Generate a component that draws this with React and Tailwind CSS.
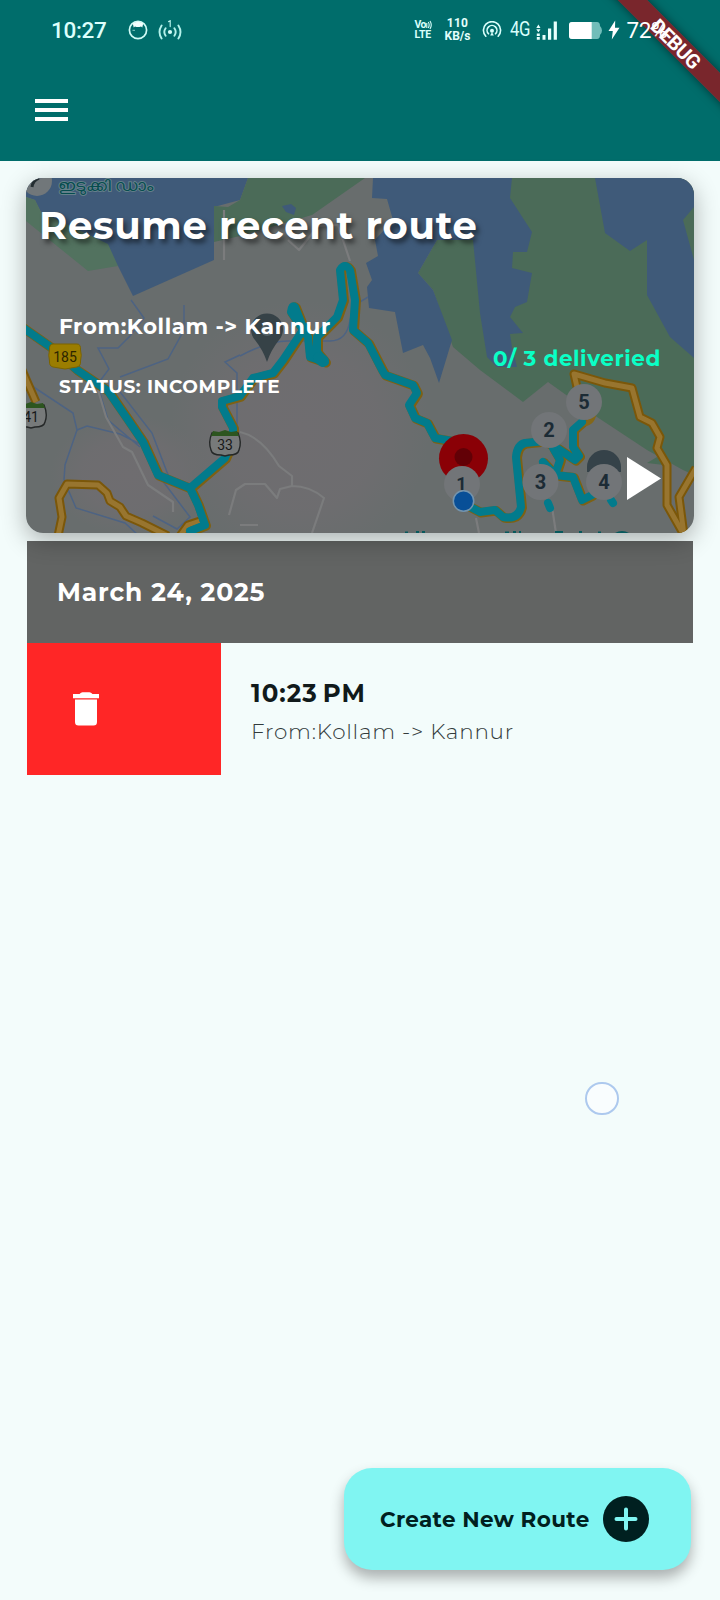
import React from "react";

const WATER = "#3f5a79";
const PARK = "#4b6b58";
const ROUTE = "#027b8c";

function SeenIcon() {
  return (
    <svg width="20" height="20" viewBox="0 0 20 20" fill="none" className="ml-[20.5px]">
      <circle cx="10" cy="10" r="8.6" stroke="#d0fbf6" strokeWidth="1.7" />
      <path d="M4.8 3.6 Q10 -.3 15.200 3.600 L14.300 7.600 L13 6.500 Q10 7.600 7 6.500 L5.700 7.600Z" fill="#f4fffe" />
      <path d="M4.500 10.300h2.500" stroke="#a8e5df" strokeWidth=".8" />
    </svg>
  );
}

function HotspotIcon() {
  return (
    <svg width="24" height="20" viewBox="0 0 24 20" fill="none" stroke="#b4f2eb" strokeWidth="1.9" strokeLinecap="round" className="ml-[10px]">
      <path d="M3.600 5.500Q-.6 12 3.600 18.500M20.400 5.500Q24.600 12 20.400 18.500M7.600 8.300Q5 12 7.600 15.700M16.400 8.300Q19 12 16.400 15.700" />
      <circle cx="12" cy="12" r="2.100" fill="#d4fdf8" stroke="none" />
      <path d="M10.600 1.600L12.200 .8V6.600" strokeWidth="1.200" />
    </svg>
  );
}

function StatusBar() {
  return (
    <div className="relative z-20 flex h-[60px] items-center pl-[51px] font-['Roboto',sans-serif] text-white">
      <span className="w-[56px] text-[22.5px] leading-none font-medium tracking-[-0.35px] whitespace-nowrap text-[#dcfffc]">10:27</span>
      <SeenIcon />
      <HotspotIcon />
      <div className="ml-[233px] flex w-[18px] flex-col text-[10.5px] leading-[10.5px] font-bold text-[#d9fffb]">
        <span className="flex items-center tracking-[-0.6px]">
          Vo
          <svg width="6" height="10" viewBox="0 0 6 10" fill="none" stroke="#d9fffb" strokeWidth="1.1">
            <path d="M.8 3v5M2.3 2Q4 5 2.3 8M4 1Q6.5 5 4 9" />
          </svg>
        </span>
        <span className="tracking-[-0.1px]">LTE</span>
      </div>
      <div className="ml-[11px] flex w-[28px] flex-col items-center text-[12px] leading-[13px] font-bold whitespace-nowrap text-[#e4fffc]">
        <span className="tracking-[0.3px]">110</span>
        <span>KB/s</span>
      </div>
      <svg width="20" height="18" viewBox="0 0 20 18" fill="none" stroke="#d9fffb" strokeWidth="1.6" strokeLinecap="round" className="ml-[10px]">
        <path d="M3.800 15.200A8.600 8.600 0 1 1 16.200 15.200M6.500 12.800A4.900 4.900 0 1 1 13.500 12.800" />
        <circle cx="10" cy="9.700" r="2" fill="#d9fffb" stroke="none" />
        <path d="M10 11L8.200 14.500H11.800Z" fill="#d9fffb" stroke="none" />
      </svg>
      <span className="ml-[8px] w-[20px] origin-left scale-x-[0.86] text-[19.5px] leading-none tracking-[-0.4px] text-[#d9fffb]">4G</span>
      <svg width="21" height="19" viewBox="0 0 21 19" fill="#e8fffd" className="ml-[6px]">
        <path d="M.3 7L2.400 3.500L4.500 7ZM.3 8.200h4.200L2.400 11.200ZM.8 12.500h3v2.400H.8zM.8 16h3v2.800H.8zM6.500 14h3v4.800h-3zM12 7.500h3.200v11.300h-3.200zM17.700.5h3.200v18.300h-3.200z" />
      </svg>
      <svg width="33" height="17" viewBox="0 0 33 17" className="ml-[12px]">
        <path d="M3 0H28Q31 0 31 4Q33 6 33 8.500T31 13Q31 17 28 17H3Q0 17 0 14V3Q0 0 3 0Z" fill="#71bdb9" />
        <path d="M3 0H22.700V17H3Q0 17 0 14V3Q0 0 3 0Z" fill="#fff" />
      </svg>
      <svg width="12" height="20" viewBox="0 0 12 20" className="ml-[6px]">
        <path d="M7.200.5L.5 11H4.800L3.800 19.500L11.500 7.800H7Z" fill="#fff" />
      </svg>
      <span className="ml-[7px] text-[22.5px] leading-none tracking-[-0.4px]">72%</span>
    </div>
  );
}

function DebugRibbon() {
  return (
    <div className="absolute top-0 right-0 h-[130px] w-[130px] overflow-hidden">
      <div className="absolute top-[33px] left-[-14px] flex h-[21px] w-[200px] rotate-45 items-center justify-center bg-[#7f2329]/95 font-['Roboto',sans-serif] text-[20px] leading-none font-bold tracking-[-0.7px] text-white shadow-[0_0_10px_rgba(0,0,0,0.5)]">
        DEBUG
      </div>
    </div>
  );
}

function Stop({ x, y, n }) {
  return (
    <g>
      <circle cx={x} cy={y} r="18" fill="#727578" />
      <text x={x} y={y + 7.2} textAnchor="middle" fontSize="20" fontWeight="700" fill="#1c2b35" className="font-['Roboto',sans-serif]">{n}</text>
    </g>
  );
}

function Shield({ x, y, n }) {
  return (
    <g>
      <path d={`M${x - 13} ${y - 11}H${x + 13}Q${x + 17} ${y - 2} ${x + 14} ${y + 6}Q${x + 13} ${y + 11} ${x + 4} ${y + 11}L${x} ${y + 12}L${x - 4} ${y + 11}Q${x - 13} ${y + 11} ${x - 14} ${y + 6}Q${x - 17} ${y - 2} ${x - 13} ${y - 11}Z`} fill="#777a7a" stroke="#252828" strokeWidth="1.4" />
      <path d={`M${x - 14} ${y - 8}L${x - 12} ${y - 13}L${x - 6} ${y - 12}L${x} ${y - 14}L${x + 6} ${y - 12}L${x + 12} ${y - 13}L${x + 14} ${y - 8}Z`} fill="#2c551f" />
      <text x={x} y={y + 6} textAnchor="middle" fontSize="14" fill="#171919" className="font-['Roboto',sans-serif]">{n}</text>
    </g>
  );
}

const ROADS = [
  "M22 370L36 402",
  "M58 536L62 517L59 498L67 484L98 485L107 493L110 501L120 507L126 516L142 523L168 536",
  "M180 536L188 525L200 521",
  "M577 387L574 374L605 383L632 388L640 417L652 423L660 437L657 448L667 465V505L684 535",
  "M696 468L679 497L684 535",
];

const ROUTES = [
  "M22 327L52 348L77 370L108 391L128 420L143 442L158 475L190 488L198 505L205 525L190 531",
  "M190 488L225 458L233 440V428L222 407V401L240 396L253 378L273 373L283 360L305 327",
  "M305 332L295 307Q292 304 291 312L308 337L310 357L325 362L317 352V337L337 317L343 300L340 270Q345 262 350 270L355 300L353 330L368 343L382 370L385 375L413 385L417 393L409 405L415 418L427 423L435 438L452 441",
  "M463 503L480 512L495 510L503 517Q518 520 521 507L516 457Q517 445 525 443L545 441L557 448L575 460L579 456L573 447V430L582 422",
  "M553 448L560 460L555 475L573 477L582 500L592 495M555 475L543 462",
];

function RouteMap() {
  return (
    <svg viewBox="26 178 668 355" className="col-start-1 row-start-1 h-full w-full">
      <defs>
        <radialGradient id="warm">
          <stop offset="0" stopColor="#6f6d70" />
          <stop offset=".6" stopColor="#6f6d70" stopOpacity=".8" />
          <stop offset="1" stopColor="#6f6d70" stopOpacity="0" />
        </radialGradient>
      </defs>
      <path d="M26 178H694V533H26Z" fill="#686d6d" />
      <ellipse cx="300" cy="430" rx="130" ry="130" fill="url(#warm)" />
      <ellipse cx="130" cy="475" rx="80" ry="60" fill="url(#warm)" />
      <path d="M26 178H248L240 200L214 207V260L133 296L118 266L41 212L35 200L26 197Z" fill={WATER} />
      <path d="M26 197L35 200L41 212L108 244L118 266L88 271L26 221Z" fill="#52725f" />
      <path d="M248 178H365L312 215L240 236L214 242V206L228 207L240 200Z" fill={PARK} />
      <path d="M282 206L291 204L296 208L294 215L286 212Z" fill={WATER} />
      <path d="M418 273L437 240L480 178H694V475L683 470L647 450L597 417L548 382L523 402L480 370L453 347L433 290Z" fill={PARK} />
      <path d="M373 178H512L510 198L532 232L527 252L513 252L512 268L532 273L527 302L515 307L510 317L523 333L510 334L512 347L517 367H497L487 357L480 313L473 240L437 240L418 273L433 290L452 340L439 383L430 358L423 345L403 353L395 312L369 308L367 287L372 280L366 263L378 256L375 240L393 220L387 199L372 198Z" fill={WATER} />
      <path d="M595 178H694V207L683 220L694 260V358L670 337L647 295V240L630 251L605 233Z" fill={WATER} />
      <path d="M647 463L657 457L664 465Z" fill={PARK} />
      <g fill="none" stroke="#4d6383" strokeWidth="1.5">
        <path d="M131 300L144 318L130 336L118 348H98L109 369L100 381M184 305V330L168 359L120 377M240 355L225 362L237 373V425M240 356Q270 340 290 341H330Q347 341 350 320L355 305L368 297M26 382L73 413L77 430L65 465L64 480L76 508L125 523L138 535M77 430L87 426L120 434L148 448L162 480L190 517L177 529L153 516M100 393L108 420L140 447M117 388L152 433L172 485L192 490L212 476L225 455" />
      </g>
      <path d="M98 390L106 417L123 447L132 452L148 485L173 502V512M240 432Q262 437 279 466L292 476V486L280 489L277 498L265 484H245L236 490L229 515M292 486Q310 486 324 498L312 533M224 210V260M288 240L299 250L318 226L338 225L350 261M240 525H258M476 518L479 533M552 507L556 533" fill="none" stroke="#7b7c7d" strokeWidth="2.2" strokeLinejoin="round" />
      <g fill="none" strokeLinejoin="round">
        {ROADS.map((d) => <path key={d} d={d} stroke="#7b5709" strokeWidth="9" />)}
        {ROADS.map((d) => <path key={d} d={d} stroke="#98752f" strokeWidth="5" />)}
      </g>
      <g fill="none" strokeLinecap="round" strokeLinejoin="round">
        <g transform="translate(1.2 .8)">
          {ROUTES.map((d) => <path key={d} d={d} stroke="#7d6114" strokeWidth="9.5" />)}
        </g>
        <path d="M582 424Q592 424 594 414" stroke="#836719" strokeWidth="5" />
        {ROUTES.map((d) => <path key={d} d={d} stroke={ROUTE} strokeWidth="8" />)}
        <path d="M319 358L323 361" stroke={ROUTE} strokeWidth="12" />
        <path d="M548 503L550 508M611 500L613 503" stroke={ROUTE} strokeWidth="8" />
      </g>
      <path d="M267 362Q263 350 255 340A16 16 0 1 1 279 340Q271 350 267 362Z" fill="#364247" />
      <circle cx="267" cy="330" r="6" fill="#526066" />
      <path d="M587 472V467A17 17 0 0 1 621 467V472Z" fill="#354249" />
      <Stop x={584} y={402} n="5" />
      <Stop x={549} y={430} n="2" />
      <Stop x={540.5} y={482} n="3" />
      <Stop x={604} y={482} n="4" />
      <circle cx="463.500" cy="458.500" r="24.500" fill="#8a0006" />
      <circle cx="463.500" cy="457" r="9" fill="#620006" />
      <circle cx="462" cy="484" r="18" fill="#727578" />
      <text x="461.500" y="489.500" textAnchor="middle" fontSize="18" fontWeight="700" fill="#1c2b35" className="font-['Roboto',sans-serif]">1</text>
      <circle cx="463.500" cy="501" r="10.200" fill="#084f97" stroke="#7494ad" strokeWidth="1.500" />
      <path d="M53 344H77Q81 344 80.500 350Q82 355 80.500 361Q81 366 77 367L65 369L53 367Q49 366 49.500 361Q48 355 49.500 350Q49 344 53 344Z" fill="#9b7d00" stroke="#7c6400" />
      <text x="65" y="362" textAnchor="middle" fontSize="14" fill="#2b2500" className="font-['Roboto',sans-serif]">185</text>
      <Shield x={31} y={416} n="41" />
      <Shield x={225} y={444} n="33" />
      <circle cx="37" cy="181" r="15" fill="#71777a" />
      <path d="M32 187Q33 180 39 178" stroke="#232d31" strokeWidth="3" fill="none" />
      <text x="58" y="191" fontSize="15" fill="#064c4e" stroke="#64808a" strokeWidth="1.800" paintOrder="stroke" textLength="95" lengthAdjust="spacingAndGlyphs" className="font-['Noto_Sans',sans-serif]">ഇടുക്കി ഡാം</text>
      <path d="M405 531.500h3v1.500h-3zM416 531h3v2h-3zM422 531h3v2h-3zM505 531.500h4v1.500h-4zM513 531h3v2h-3zM519 531h2v2h-2zM555 531h8v2h-8zM579 531h3v2h-3zM598 531.500h3v1.500h-3zM615 533Q622 529 629 533Z" fill="#07595c" />
      <path d="M627 457L661 478.500L627 500Z" fill="#fff" />
    </svg>
  );
}

function ResumeCard() {
  return (
    <section className="relative z-10 mx-[26px] mt-[17px] grid h-[355px] overflow-hidden rounded-[17px] shadow-[0_7px_24px_rgba(0,0,0,0.3)]">
      <RouteMap />
      <div className="relative col-start-1 row-start-1 flex flex-col whitespace-nowrap text-white">
        <h1 className="mt-[25px] ml-[13px] text-[38.5px] leading-[46px] font-bold tracking-[0.7px] [text-shadow:3px_4px_5px_rgba(0,0,0,0.5)]">Resume recent route</h1>
        <div className="mt-[63px] flex justify-between pr-[33px] pl-[33px]">
          <div>
            <p className="text-[21.5px] leading-[28px] font-bold tracking-[0.6px]">{"From:Kollam -> Kannur"}</p>
            <p className="mt-[36px] text-[18.5px] leading-[22px] font-bold tracking-[0.55px]">STATUS: INCOMPLETE</p>
          </div>
          <p className="mt-[32px] text-[21.5px] leading-[28px] font-bold tracking-[0.6px] text-[#0affc6]">0/ 3 deliveried</p>
        </div>
      </div>
    </section>
  );
}

function History() {
  return (
    <section className="mx-[27px] mt-[8px] whitespace-nowrap">
      <h2 className="flex h-[102px] items-center bg-[#626463] pt-[2px] pl-[30px] text-[25px] font-bold tracking-[0.88px] text-white">March 24, 2025</h2>
      <div className="flex h-[132px]">
        <div className="flex w-[194px] items-center bg-[#ff2626] pl-[46px]">
          <svg width="26" height="34" viewBox="0 0 26 34" fill="#fff">
            <path d="M0 2H6.500Q8 .3 9.500 .3H16.500Q18 .3 19.500 2H26V6.200H0ZM2 7.500H24V30Q24 33.500 20.500 33.500H5.500Q2 33.500 2 30Z" />
          </svg>
        </div>
        <div className="flex flex-col pt-[34px] pl-[30px]">
          <p className="text-[24.5px] leading-[32px] font-bold tracking-[1.05px] [word-spacing:-3px] text-[#111a1b]">10:23 PM</p>
          <p className="mt-[8px] text-[21.5px] leading-[28px] font-light tracking-[0.75px] text-[#323b3b]">{"From:Kollam -> Kannur"}</p>
        </div>
      </div>
    </section>
  );
}

export default function App() {
  return (
    <div className="relative flex h-[1600px] w-[720px] flex-col overflow-hidden bg-[#f3fcfb] font-['Montserrat','Inter',sans-serif]">
      <header className="h-[161px] shrink-0 bg-[#006d6b]">
        <StatusBar />
        <button aria-label="Menu" className="mt-[39px] ml-[35px] flex w-[33px] flex-col gap-[5px]">
          <span className="h-1 bg-white" />
          <span className="h-1 bg-white" />
          <span className="h-1 bg-white" />
        </button>
      </header>
      <DebugRibbon />
      <ResumeCard />
      <History />
      <div className="absolute top-[1082px] left-[585px] h-[33px] w-[34px] rounded-full border-2 border-[#adc9ee] bg-[#f9fdfe]" />
      <button className="mt-auto mr-[29.5px] mb-[30px] flex h-[102px] w-[347px] items-center self-end rounded-[28px] bg-[#80f5f2] pl-[36.5px] whitespace-nowrap text-[#002020] shadow-[0_8px_14px_rgba(0,0,0,0.3)]">
        <span className="w-[209px] text-left text-[21.5px] font-bold tracking-[0.35px]">Create New Route</span>
        <svg width="46" height="46" viewBox="0 0 46 46" className="ml-[14px]">
          <circle cx="23" cy="23" r="23" fill="#002020" />
          <path d="M23 13.500V32.500M13.500 23H32.500" stroke="#80f5f2" strokeWidth="4" strokeLinecap="round" />
        </svg>
      </button>
    </div>
  );
}
